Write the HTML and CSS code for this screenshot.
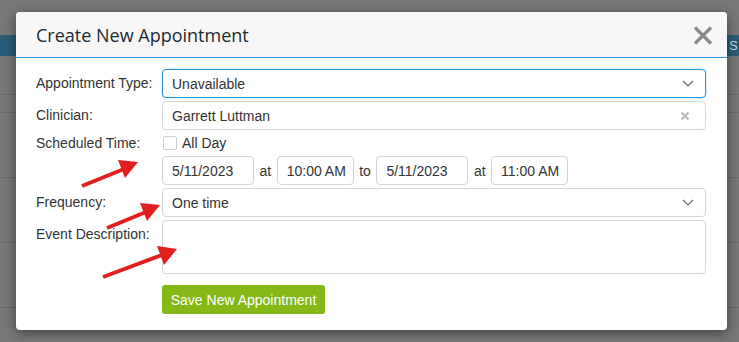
FILE: index.html
```html
<!DOCTYPE html>
<html>
<head>
<meta charset="utf-8">
<link rel="stylesheet" href="styles.css">
</head>
<body>
<div class="page">
  <div class="page-top"></div>
  <div class="page-bar"><span class="bar-text">S</span></div>
  <div class="page-rows">
    <div class="prow r1"></div>
    <div class="prow r2"></div>
    <div class="prow r3"></div>
    <div class="prow r4"></div>
    <div class="prow r5"></div>
  </div>
</div>

<div class="modal">
  <div class="modal-header">
    <h1 class="modal-title">Create New Appointment</h1>
    <svg class="close" width="20" height="19" viewBox="0 0 20 19"><path d="M2 1.5 L18 17.5 M18 1.5 L2 17.5" stroke="#8a8a8a" stroke-width="3.2" fill="none"/></svg>
  </div>
  <div class="modal-body">
    <div class="form-grid">
      <div class="label">Appointment Type:</div>
      <div class="field focus">Unavailable<svg class="chev" width="12" height="7" viewBox="0 0 12 7"><path d="M1 1 L6 6 L11 1" stroke="#666" stroke-width="1.2" fill="none"/></svg></div>

      <div class="label">Clinician:</div>
      <div class="field">Garrett Luttman<svg class="clear" width="10" height="10" viewBox="0 0 10 10"><path d="M1.5 1.5 L8.5 8.5 M8.5 1.5 L1.5 8.5" stroke="#bdbdbd" stroke-width="2.4" fill="none"/></svg></div>

      <div class="label short">Scheduled Time:</div>
      <div class="sched">
        <div class="allday"><span class="checkbox"></span>All Day</div>
        <div class="dates">
          <div class="field date">5/11/2023</div>
          <span class="word">at</span>
          <div class="field time">10:00 AM</div>
          <span class="word">to</span>
          <div class="field date">5/11/2023</div>
          <span class="word">at</span>
          <div class="field time">11:00 AM</div>
        </div>
      </div>

      <div class="label">Frequency:</div>
      <div class="field">One time<svg class="chev" width="12" height="7" viewBox="0 0 12 7"><path d="M1 1 L6 6 L11 1" stroke="#666" stroke-width="1.2" fill="none"/></svg></div>

      <div class="label">Event Description:</div>
      <div class="field textarea"></div>

      <div></div>
      <div class="actions"><button class="btn">Save New Appointment</button></div>
    </div>
  </div>
</div>

<svg class="arrows" width="739" height="342" viewBox="0 0 739 342">
  <g stroke="#e31e1e" stroke-width="4" fill="#e31e1e">
    <line x1="82" y1="186" x2="124" y2="169"/>
    <polygon points="138,162 118,160 125,178" stroke="none"/>
    <line x1="107" y1="228" x2="146" y2="212"/>
    <polygon points="160,205 140,203 147,221" stroke="none"/>
    <line x1="103" y1="277" x2="162" y2="255"/>
    <polygon points="177,249 157,246 164,265" stroke="none"/>
  </g>
</svg>
</body>
</html>
```
FILE: styles.css
```css
* { box-sizing: border-box; }
html, body { margin: 0; padding: 0; }
body {
  width: 739px;
  height: 342px;
  overflow: hidden;
  background: #777777;
  font-family: "Liberation Sans", Arial, sans-serif;
  position: relative;
}

.page { width: 739px; height: 342px; }
.page-top { height: 35px; }
.page-bar {
  height: 21px;
  background: #2b5c77;
  display: flex;
  justify-content: flex-end;
  align-items: center;
}
.bar-text { color: #cfd8de; font-size: 13px; width: 10px; margin-right: 0; }
.page-rows { position: relative; }
.prow { border-bottom: 1px solid #6a6a6a; }
.r1 { height: 39px; }
.r2 { height: 18px; }
.r3 { height: 65px; }
.r4 { height: 65px; }
.r5 { height: 65px; }

.modal {
  position: absolute;
  left: 16px;
  top: 12px;
  width: 711px;
  height: 318px;
  background: #ffffff;
  border-radius: 4px;
  box-shadow: 0 3px 12px rgba(0,0,0,0.45);
  overflow: hidden;
}
.modal-header {
  height: 46px;
  background: #f7f7f7;
  border-bottom: 1px solid #2a90d8;
  display: flex;
  align-items: center;
  justify-content: space-between;
  padding: 0 14px 0 20px;
}
.modal-title {
  margin: 0;
  font-family: "Open Sans", sans-serif;
  font-weight: 400;
  font-size: 18px;
  color: #1f2a33;
  letter-spacing: 0;
}
.close { display: block; margin-top: 1px; }

.modal-body { padding: 11px 21px 0 20px; }
.form-grid {
  display: grid;
  grid-template-columns: 126px 1fr;
  row-gap: 3px;
  font-size: 14px;
  color: #333;
}
.label { line-height: 29px; height: 29px; white-space: nowrap; }
.label.short { line-height: 20px; height: 20px; }

.field {
  height: 29px;
  border: 1px solid #d6d6d6;
  border-radius: 4px;
  padding: 0 9px;
  display: flex;
  align-items: center;
  justify-content: space-between;
  background: #fff;
  color: #333;
  white-space: nowrap;
}
.field.focus {
  border-color: #2d95dc;
  box-shadow: 0 0 2px rgba(45,149,220,0.5);
}
.chev { margin-right: 2px; }
.clear { margin-right: 6px; }
.field.textarea { height: 54px; }

.sched { display: flex; flex-direction: column; gap: 3px; }
.allday { height: 20px; display: flex; align-items: center; }
.checkbox {
  width: 14px; height: 14px;
  border: 1px solid #cfcfcf;
  border-radius: 2px;
  margin-left: 1px;
  margin-right: 5px;
}
.dates { display: flex; align-items: center; }
.field.date { width: 92px; }
.field.time { width: 77px; }
.word { padding: 0 5.5px; }

.actions { padding-top: 8px; }
.btn {
  height: 29px;
  width: 163px;
  border: none;
  border-radius: 3px;
  background: #84b817;
  color: #fff;
  font-family: "Liberation Sans", Arial, sans-serif;
  font-size: 14px;
  padding: 0;
}

.arrows { position: absolute; left: 0; top: 0; pointer-events: none; }
```
